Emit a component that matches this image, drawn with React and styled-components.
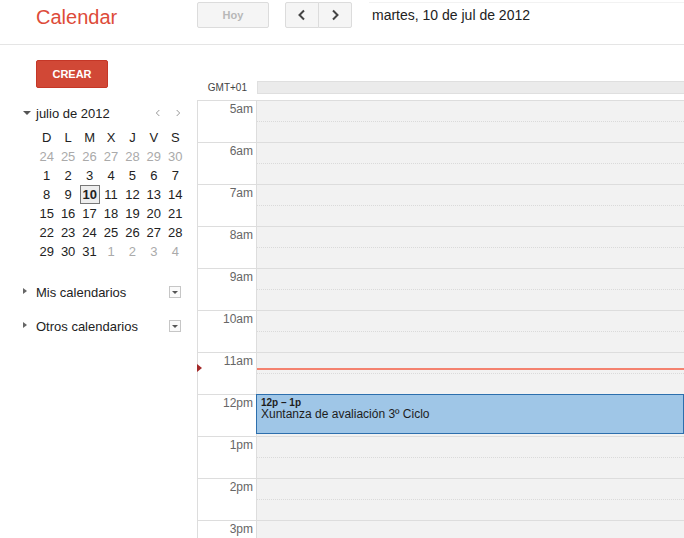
import React from 'react';
import styled, { createGlobalStyle, css } from 'styled-components';

const GlobalStyle = createGlobalStyle`
  html, body { margin: 0; padding: 0; background: #fff; }
  body { font-family: "Liberation Sans", Arial, sans-serif; color: #222; }
  * { box-sizing: border-box; }
`;

const Page = styled.div`
  height: 538px;
  overflow: hidden;
  display: flex;
  flex-direction: column;
`;

const Header = styled.header`
  height: 45px;
  border-bottom: 1px solid #e5e5e5;
  display: flex;
  align-items: flex-start;
  flex-shrink: 0;
`;

const Logo = styled.div`
  width: 197px;
  padding: 6px 0 0 36px;
  font-size: 20px;
  color: #dd4b39;
`;

const Btn = styled.button`
  height: 26px;
  margin-top: 2px;
  border: 1px solid #dcdcdc;
  background: #f5f5f5;
  border-radius: 2px;
  font-family: inherit;
  padding: 0;
  display: flex;
  align-items: center;
  justify-content: center;
  ${(p) => p.disabled && css`
    color: #b8b8b8;
    font-size: 11px;
    font-weight: bold;
  `}
`;

const TodayBtn = styled(Btn)`
  width: 72px;
`;

const NavGroup = styled.div`
  display: flex;
  margin-left: 16px;
`;

const NavBtn = styled(Btn)`
  width: 34px;
  ${(p) => p.first && css`border-radius: 2px 0 0 2px;`}
  ${(p) => p.last && css`border-radius: 0 2px 2px 0; margin-left: -1px;`}
`;

const DateTitle = styled.div`
  margin: 2px 0 0 17px;
  padding: 4px 0 0 3px;
  flex: 1;
  height: 26px;
  font-size: 14px;
  color: #222;
  border-top: 1px solid #f2f2f2;
`;

const Body = styled.div`
  display: flex;
  flex: 1;
  min-height: 0;
`;

const Sidebar = styled.aside`
  width: 197px;
  flex-shrink: 0;
  padding-top: 15px;
`;

const CreateBtn = styled.button`
  margin-left: 36px;
  width: 72px;
  height: 28px;
  border: 1px solid #c53727;
  border-radius: 2px;
  background: #d14836;
  color: #fff;
  font-family: inherit;
  font-size: 11px;
  font-weight: bold;
  padding: 0;
`;

const MiniCal = styled.div`
  margin-top: 16px;
  padding-left: 36px;
  width: 186px;
`;

const MiniHead = styled.div`
  position: relative;
  display: flex;
  align-items: center;
  height: 18px;
  font-size: 13px;
  color: #222;
`;

const Caret = styled.span`
  position: absolute;
  left: -13px;
  top: ${(p) => (p.down ? 7 : 5)}px;
  width: 0;
  height: 0;
  ${(p) => (p.down
    ? css`
      border-left: 4px solid transparent;
      border-right: 4px solid transparent;
      border-top: 4px solid #555;
    `
    : css`
      border-top: 3.5px solid transparent;
      border-bottom: 3.5px solid transparent;
      border-left: 4px solid #666;
    `)}
`;

const MiniNav = styled.div`
  margin-left: auto;
  display: flex;
  gap: 12px;
  padding-right: 4px;
`;

const DayGrid = styled.div`
  margin-top: 6px;
  display: grid;
  grid-template-columns: repeat(7, 1fr);
  grid-auto-rows: 19px;
`;

const DayCell = styled.div`
  display: flex;
  align-items: center;
  justify-content: center;
  font-size: 13px;
  color: ${(p) => (p.muted ? '#aaa' : '#222')};
  ${(p) => p.today && css`
    font-weight: bold;
    background: #eee;
    border: 1px solid #777;
    margin: 0 0.5px 0 1px;
  `}
`;

const Section = styled.div`
  position: relative;
  margin: ${(p) => p.gap}px 0 0 36px;
  width: 145px;
  height: 18px;
  display: flex;
  align-items: center;
  font-size: 13px;
  color: #222;
`;

const DropBox = styled.span`
  margin-left: auto;
  width: 12px;
  height: 12px;
  border: 1px solid #c6c6c6;
  background: #fafafa;
  display: flex;
  align-items: center;
  justify-content: center;
  &::after {
    content: '';
    border-left: 3px solid transparent;
    border-right: 3px solid transparent;
    border-top: 3px solid #555;
  }
`;

const Main = styled.main`
  flex: 1;
  display: flex;
  flex-direction: column;
  min-width: 0;
  padding-top: 36px;
`;

const AllDayRow = styled.div`
  display: flex;
  align-items: center;
  height: 13px;
`;

const TzLabel = styled.div`
  width: 60px;
  text-align: right;
  padding-right: 10px;
  font-size: 10px;
  color: #444;
`;

const AllDayBar = styled.div`
  flex: 1;
  height: 13px;
  background: #ebebeb;
  border: 1px solid #dfdfdf;
  border-right: none;
`;

const Grid = styled.div`
  position: relative;
  margin-top: 6px;
  display: flex;
  border-left: 1px solid #dddddd;
  border-top: 1px solid #dddddd;
`;

const TimeCol = styled.div`
  width: 59px;
  flex-shrink: 0;
  border-right: 1px solid #dddddd;
`;

const TimeCell = styled.div`
  height: 42px;
  border-bottom: 1px solid #dddddd;
  text-align: right;
  padding: 1px 3px 0 0;
  font-size: 12px;
  color: #666;
`;

const DayCol = styled.div`
  position: relative;
  flex: 1;
  background: #f2f2f2;
`;

const HourSlot = styled.div`
  height: 42px;
  border-bottom: 1px solid #dddddd;
  display: flex;
  flex-direction: column;
  &::before {
    content: '';
    height: 20px;
    border-bottom: 1px dotted #dadada;
  }
`;

const NowLine = styled.div`
  position: absolute;
  left: 0;
  right: 0;
  top: 267px;
  height: 2px;
  background: #f4826f;
`;

const NowMarker = styled.div`
  position: absolute;
  left: -1px;
  top: 263px;
  width: 0;
  height: 0;
  border-top: 4px solid transparent;
  border-bottom: 4px solid transparent;
  border-left: 5px solid #a32929;
`;

const Event = styled.div`
  position: absolute;
  left: -1px;
  right: 0;
  top: 293px;
  height: 40px;
  background: #9fc6e7;
  border: 1px solid #2d6fad;
  padding: 2px 4px;
  color: #1d1d1d;
`;

const EventTime = styled.div`
  font-size: 10px;
  font-weight: bold;
  line-height: 11px;
`;

const EventTitle = styled.div`
  font-size: 12px;
  line-height: 13px;
`;

const Chevron = ({ dir, size = 12, color = '#444', width = 2 }) => (
  <svg width={size} height={size} viewBox="0 0 12 12">
    <path
      d={dir === 'left' ? 'M8 1.5 L3.5 6 L8 10.5' : 'M4 1.5 L8.5 6 L4 10.5'}
      fill="none"
      stroke={color}
      strokeWidth={width}
    />
  </svg>
);

const weekDays = ['D', 'L', 'M', 'X', 'J', 'V', 'S'];
const days = [
  [24, 1], [25, 1], [26, 1], [27, 1], [28, 1], [29, 1], [30, 1],
  ...Array.from({ length: 31 }, (_, i) => [i + 1, 0]),
  [1, 1], [2, 1], [3, 1], [4, 1],
];
const hours = ['5am', '6am', '7am', '8am', '9am', '10am', '11am', '12pm', '1pm', '2pm', '3pm', '4pm', '5pm'];

export default function App() {
  return (
    <Page>
      <GlobalStyle />
      <Header>
        <Logo>Calendar</Logo>
        <TodayBtn disabled>Hoy</TodayBtn>
        <NavGroup>
          <NavBtn first><Chevron dir="left" /></NavBtn>
          <NavBtn last><Chevron dir="right" /></NavBtn>
        </NavGroup>
        <DateTitle>martes, 10 de jul de 2012</DateTitle>
      </Header>
      <Body>
        <Sidebar>
          <CreateBtn>CREAR</CreateBtn>
          <MiniCal>
            <MiniHead>
              <Caret down />
              julio de 2012
              <MiniNav>
                <Chevron dir="left" size={8} color="#888" width={1.3} />
                <Chevron dir="right" size={8} color="#888" width={1.3} />
              </MiniNav>
            </MiniHead>
            <DayGrid>
              {weekDays.map((d) => <DayCell key={d}>{d}</DayCell>)}
              {days.map(([n, muted], i) => (
                <DayCell key={i} muted={muted} today={!muted && n === 10}>{n}</DayCell>
              ))}
            </DayGrid>
          </MiniCal>
          <Section gap={22}>
            <Caret />
            Mis calendarios
            <DropBox />
          </Section>
          <Section gap={16}>
            <Caret />
            Otros calendarios
            <DropBox />
          </Section>
        </Sidebar>
        <Main>
          <AllDayRow>
            <TzLabel>GMT+01</TzLabel>
            <AllDayBar />
          </AllDayRow>
          <Grid>
            <TimeCol>
              {hours.map((h) => <TimeCell key={h}>{h}</TimeCell>)}
            </TimeCol>
            <DayCol>
              {hours.map((h) => <HourSlot key={h} />)}
              <NowLine />
              <Event>
                <EventTime>12p – 1p</EventTime>
                <EventTitle>Xuntanza de avaliación 3º Ciclo</EventTitle>
              </Event>
            </DayCol>
            <NowMarker />
          </Grid>
        </Main>
      </Body>
    </Page>
  );
}
